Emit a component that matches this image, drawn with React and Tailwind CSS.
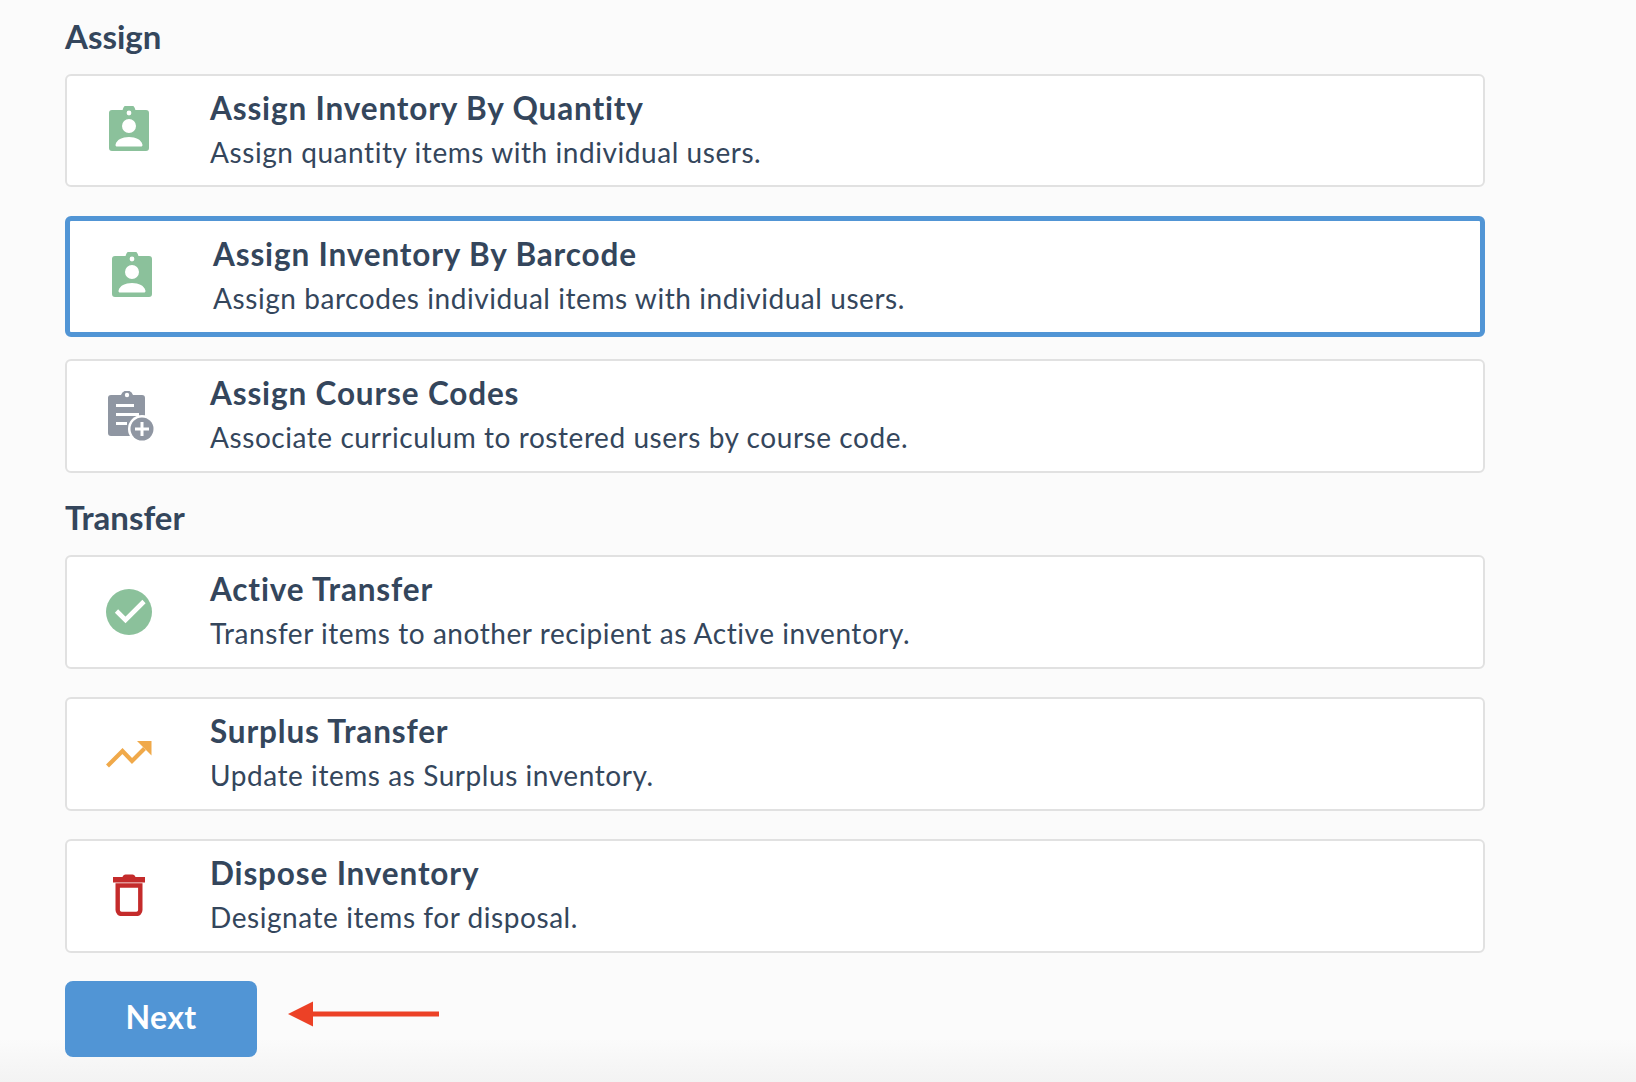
const TITLE = "text-[31.5px] leading-[40px] font-bold text-[#34465c] tracking-[0.85px] whitespace-nowrap";
const SUB = "text-[28px] leading-[40px] font-normal text-[#34465c] tracking-[0.56px] whitespace-nowrap mt-[4px]";
const HEAD = "text-[33px] leading-[40px] font-bold text-[#34465c]";

function BadgeIcon() {
  return (
    <svg width="46" height="46" viewBox="0 0 46 46" className="block -mt-[4px]">
      <path fillRule="evenodd" fill="#8bc19b" d="M6 4h10.600a6.500 6.500 0 0 1 12.800 0H40a3 3 0 0 1 3 3v35a3 3 0 0 1-3 3H6a3 3 0 0 1-3-3V7a3 3 0 0 1 3-3ZM23 4.600a2.400 2.400 0 1 0 0 4.800a2.400 2.400 0 1 0 0-4.800ZM23 13a7 7 0 1 0 0 14a7 7 0 1 0 0-14ZM23 31c-7 0-12.400 3-13.400 7.400c-.3 1.300.4 2.100 1.600 2.100h23.600c1.200 0 1.900-.8 1.600-2.100C35.400 34 30 31 23 31Z" />
    </svg>
  );
}

function ClipIcon() {
  return (
    <svg width="47" height="50" viewBox="0 0 47 50" className="block ml-[3px] -mt-[1px]">
      <path fill="#8f96a2" d="M3 4h10a6.300 6.300 0 0 1 12 0h9a3 3 0 0 1 3 3v38H3a3 3 0 0 1-3-3V7a3 3 0 0 1 3-3Z" transform="translate(1 0)" />
      <circle cx="20" cy="4" r="2.200" fill="#fff" />
      <rect x="9" y="13" width="18" height="3" fill="#fff" />
      <rect x="9" y="22" width="23" height="3" fill="#fff" />
      <rect x="9" y="31" width="11" height="3" fill="#fff" />
      <circle cx="35" cy="38" r="14" fill="#fff" />
      <circle cx="35" cy="38" r="11.500" fill="#8f96a2" />
      <rect x="28" y="36.500" width="14" height="3" fill="#fff" />
      <rect x="33.500" y="31" width="3" height="14" fill="#fff" />
    </svg>
  );
}

function CheckIcon() {
  return (
    <svg width="46" height="46" viewBox="0 0 46 46" className="block">
      <circle cx="23" cy="23" r="23" fill="#8bc19b" />
      <path d="M10.500 22 L19.500 31 L38 12.500" fill="none" stroke="#fff" strokeWidth="4.600" />
    </svg>
  );
}

function TrendIcon() {
  return (
    <svg width="46" height="30" viewBox="0 0 46 30" className="block">
      <path d="M1.500 27 L16.500 12 L26 22 L38.500 9.500" fill="none" stroke="#f0a94a" strokeWidth="4.200" />
      <path d="M31 2 H45.500 V16.500 Z" fill="#f0a94a" />
    </svg>
  );
}

function TrashIcon() {
  return (
    <svg width="32" height="42" viewBox="0 0 32 42" className="block -mt-[3px]">
      <path fill="#c42b2b" d="M0 3h9.500c.5-1.600 1.600-2.600 3-2.600h7c1.400 0 2.500 1 3 2.600H32v5.500H0Z" />
      <path fill="none" stroke="#c42b2b" strokeWidth="4.400" d="M4.700 11.500V36a4 4 0 0 0 4 4h14.600a4 4 0 0 0 4-4V11.500Z" />
    </svg>
  );
}

function Card({ icon, title, sub, selected, className }) {
  return (
    <div className={`flex items-center w-[1420px] bg-white rounded-[6px] ${selected ? "border-[5px] border-[#5195d5]" : "border-2 border-[#e1e1e1]"} ${className}`}>
      <div className="w-[143px] shrink-0 flex justify-center pr-[20px]">{icon}</div>
      <div className="flex flex-col pb-[2px]">
        <div className={TITLE}>{title}</div>
        <div className={SUB}>{sub}</div>
      </div>
    </div>
  );
}

export default function App() {
  return (
    <div className="relative h-[1082px] overflow-hidden pl-[65px] pt-[16px] bg-[linear-gradient(to_bottom,#fbfbfb_96%,#f3f3f3_100%)] font-['Lato',sans-serif]">
      <h2 className={`${HEAD} mb-[18px]`}>Assign</h2>
      <Card className="h-[113px]" icon={<BadgeIcon />} title="Assign Inventory By Quantity" sub="Assign quantity items with individual users." />
      <Card className="h-[121px] mt-[29px]" selected icon={<BadgeIcon />} title="Assign Inventory By Barcode" sub="Assign barcodes individual items with individual users." />
      <Card className="h-[114px] mt-[22px]" icon={<ClipIcon />} title="Assign Course Codes" sub="Associate curriculum to rostered users by course code." />
      <h2 className={`${HEAD} mt-[24px] mb-[18px]`}>Transfer</h2>
      <Card className="h-[114px]" icon={<CheckIcon />} title="Active Transfer" sub="Transfer items to another recipient as Active inventory." />
      <Card className="h-[114px] mt-[28px]" icon={<TrendIcon />} title="Surplus Transfer" sub="Update items as Surplus inventory." />
      <Card className="h-[114px] mt-[28px]" icon={<TrashIcon />} title="Dispose Inventory" sub="Designate items for disposal." />
      <button className="block mt-[28px] w-[192px] h-[76px] pb-[4px] rounded-[8px] bg-[#5195d5] text-white text-[32px] font-bold tracking-[0.4px]">Next</button>
      <svg width="152" height="26" viewBox="0 0 152 26" className="absolute left-[288px] top-[1001px]">
        <path d="M0 13 L25 0.500 V25.500 Z" fill="#ec4126" />
        <rect x="24" y="10.500" width="127" height="5" fill="#ec4126" />
      </svg>
    </div>
  );
}
